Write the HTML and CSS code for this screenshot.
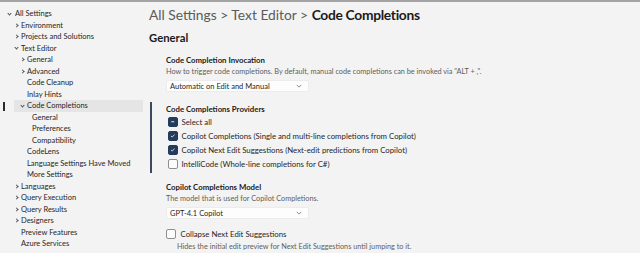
FILE: index.html
```html
<!DOCTYPE html>
<html>
<head>
<meta charset="utf-8">
<link rel="stylesheet" href="styles.css">
</head>
<body>
<div class="app">
  <nav class="tree">
    <div class="row l0"><span class="chev down"></span>All Settings</div>
    <div class="row l1"><span class="chev right"></span>Environment</div>
    <div class="row l1"><span class="chev right"></span>Projects and Solutions</div>
    <div class="row l1"><span class="chev down"></span>Text Editor</div>
    <div class="row l2"><span class="chev right"></span>General</div>
    <div class="row l2"><span class="chev right"></span>Advanced</div>
    <div class="row l2"><span class="chev none"></span>Code Cleanup</div>
    <div class="row l2"><span class="chev none"></span>Inlay Hints</div>
    <div class="row l2 selected"><span class="indicator"></span><span class="chev down"></span>Code Completions</div>
    <div class="row l3">General</div>
    <div class="row l3">Preferences</div>
    <div class="row l3">Compatibility</div>
    <div class="row l2"><span class="chev none"></span>CodeLens</div>
    <div class="row l2"><span class="chev none"></span>Language Settings Have Moved</div>
    <div class="row l2"><span class="chev none"></span>More Settings</div>
    <div class="row l1"><span class="chev right"></span>Languages</div>
    <div class="row l1"><span class="chev right"></span>Query Execution</div>
    <div class="row l1"><span class="chev right"></span>Query Results</div>
    <div class="row l1"><span class="chev right"></span>Designers</div>
    <div class="row l1"><span class="chev none"></span>Preview Features</div>
    <div class="row l1"><span class="chev none"></span>Azure Services</div>
  </nav>
  <main class="content">
    <h1 class="crumbs"><span class="crumb">All Settings &gt; Text Editor &gt; </span><span class="current">Code Completions</span></h1>
    <h2 class="group">General</h2>

    <section class="setting s-invocation">
      <div class="label">Code Completion Invocation</div>
      <div class="desc">How to trigger code completions. By default, manual code completions can be invoked via "ALT + ,".</div>
      <div class="select"><span>Automatic on Edit and Manual</span><svg class="caret" viewBox="0 0 8 5" width="6" height="4"><path d="M1 1 L4 4 L7 1" fill="none" stroke="#555" stroke-width="0.9"/></svg></div>
    </section>

    <section class="setting s-providers">
      <div class="label">Code Completions Providers</div>
      <div class="check-row"><span class="box on"><svg viewBox="0 0 10 10" width="10" height="10"><path d="M3 5 H7" stroke="#fff" stroke-width="1.2"/></svg></span>Select all</div>
      <div class="check-row"><span class="box on"><svg viewBox="0 0 10 10" width="10" height="10"><path d="M2.6 5.2 L4.3 6.8 L7.4 3.4" fill="none" stroke="#fff" stroke-width="1"/></svg></span>Copilot Completions (Single and multi-line completions from Copilot)</div>
      <div class="check-row"><span class="box on"><svg viewBox="0 0 10 10" width="10" height="10"><path d="M2.6 5.2 L4.3 6.8 L7.4 3.4" fill="none" stroke="#fff" stroke-width="1"/></svg></span>Copilot Next Edit Suggestions (Next-edit predictions from Copilot)</div>
      <div class="check-row"><span class="box"></span>IntelliCode (Whole-line completions for C#)</div>
    </section>

    <section class="setting s-model">
      <div class="label">Copilot Completions Model</div>
      <div class="desc">The model that is used for Copilot Completions.</div>
      <div class="select"><span>GPT-4.1 Copilot</span><svg class="caret" viewBox="0 0 8 5" width="6" height="4"><path d="M1 1 L4 4 L7 1" fill="none" stroke="#555" stroke-width="0.9"/></svg></div>
    </section>

    <section class="setting s-collapse">
      <div class="check-row solo"><span class="box"></span>Collapse Next Edit Suggestions</div>
      <div class="desc sub">Hides the initial edit preview for Next Edit Suggestions until jumping to it.</div>
    </section>
  </main>
</div>
</body>
</html>
```
FILE: styles.css
```css
html, body {
  margin: 0;
  padding: 0;
  height: 100%;
  overflow: hidden;
}
body {
  background: #f3f3f3;
  border-top: 2px solid #a3a3a3;
  box-sizing: border-box;
  font-family: Lato, "Noto Sans", sans-serif;
  color: #1f1f1f;
}
.app {
  display: flex;
  height: 100%;
}
.tree {
  width: 145px;
  flex: none;
  padding-top: 6px;
  font-size: 7.5px;
}
.row {
  position: relative;
  display: flex;
  align-items: center;
  height: 11.5px;
  line-height: 11.5px;
  white-space: nowrap;
  color: #262626;
}
.chev {
  display: inline-block;
  width: 6px;
  flex: none;
  position: relative;
  height: 6px;
}
.chev.right::before {
  content: "";
  position: absolute;
  left: 0;
  top: 1.6px;
  width: 2px;
  height: 2px;
  border-right: 0.8px solid #555;
  border-bottom: 0.8px solid #555;
  transform: rotate(-45deg);
}
.chev.down::before {
  content: "";
  position: absolute;
  left: 0.4px;
  top: 1px;
  width: 2px;
  height: 2px;
  border-right: 0.8px solid #555;
  border-bottom: 0.8px solid #555;
  transform: rotate(45deg);
}
.l0 { padding-left: 8px; }
.l0 .chev { width: 7px; }
.l1 { padding-left: 15px; }
.l2 { padding-left: 21px; }
.l3 { padding-left: 32px; }
.selected {
  background: #e5e5e5;
  margin-left: 14px;
  padding-left: 7px;
  margin-right: 2px;
}
.indicator {
  position: absolute;
  left: -11px;
  top: 1.5px;
  width: 2px;
  height: 9px;
  background: #2b2b2b;
}
.content {
  flex: 1;
  padding-left: 4px;
}
.crumbs {
  margin: 0;
  padding-top: 4px;
  font-size: 13.8px;
  line-height: 18px;
  font-weight: normal;
  white-space: nowrap;
}
.crumb { color: #5a5a5a; }
.current { font-weight: 700; color: #1b1b1b; letter-spacing: -0.3px; }
.group {
  margin: 6px 0 0;
  font-size: 11.3px;
  line-height: 15px;
  font-weight: 700;
  color: #1b1b1b;
}
.setting {
  padding-left: 17px;
}
.label {
  font-size: 7.8px;
  font-weight: 700;
  line-height: 12px;
  color: #1b1b1b;
}
.desc {
  font-size: 7.3px;
  line-height: 12px;
  color: #5e5e5e;
  white-space: nowrap;
}
.select {
  margin-top: 2px;
  width: 143px;
  height: 12px;
  box-sizing: border-box;
  background: #fdfdfd;
  border: 1px solid #ececec;
  border-radius: 2px;
  display: flex;
  align-items: center;
  justify-content: space-between;
  padding: 0 6px 0 3px;
  font-size: 7.5px;
  color: #1f1f1f;
}
.s-invocation { margin-top: 9px; }
.s-providers {
  margin-top: 10px;
  margin-left: 1px;
  padding-left: 14px;
  border-left: 2px solid #3a4a5e;
  padding-top: 1px;
  padding-bottom: 2px;
}
.check-row {
  display: flex;
  align-items: center;
  height: 14px;
  font-size: 7.8px;
  color: #262626;
  white-space: nowrap;
}
.s-providers .check-row:first-of-type { height: 11px; margin-bottom: 2px; }
.box {
  width: 9.5px;
  height: 9.5px;
  box-sizing: border-box;
  border: 1px solid #8f8f8f;
  border-radius: 2px;
  background: #fbfbfb;
  margin: 0 4px 0 2px;
  display: inline-flex;
  align-items: center;
  justify-content: center;
  flex: none;
}
.box svg { width: 9.5px; height: 9.5px; }
.box.on {
  background: #233c5c;
  border-color: #233c5c;
}
.s-model { margin-top: 8px; }
.s-collapse { margin-top: 8px; }
.check-row.solo .box { margin-left: 0; margin-right: 5px; }
.desc.sub { padding-left: 11px; }
```
